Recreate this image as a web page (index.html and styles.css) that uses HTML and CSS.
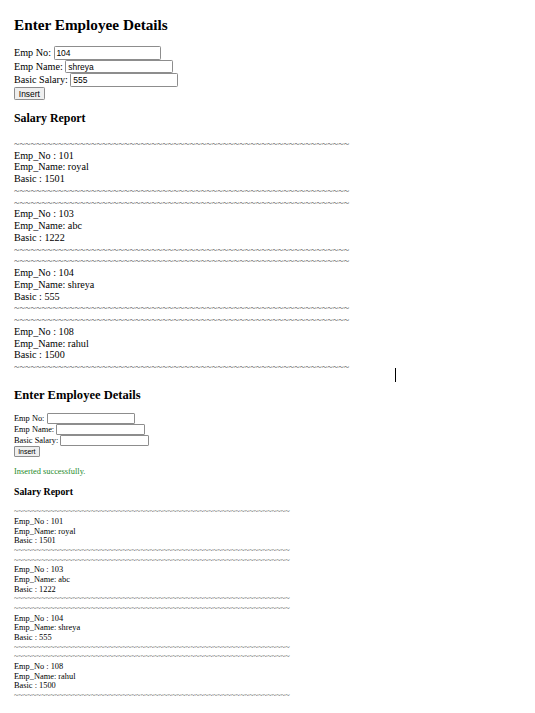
FILE: index.html
```html
<!DOCTYPE html>
<html>
<head>
<meta charset="utf-8">
<title>Employee Details</title>
<link rel="stylesheet" href="styles.css">
</head>
<body>
<div class="sheet">
  <section class="shot shot-top">
    <h2 class="title">Enter Employee Details</h2>
    <form class="emp-form">
      <div class="row">Emp No: <input class="field" type="text" value="104"></div>
      <div class="row">Emp Name: <input class="field" type="text" value="shreya"></div>
      <div class="row">Basic Salary: <input class="field" type="text" value="555"></div>
      <div class="row"><button class="btn" type="button">Insert</button></div>
    </form>
    <h3 class="subtitle">Salary Report</h3>
    <div class="report">
      <div class="record">
        <span class="rule">~~~~~~~~~~~~~~~~~~~~~~~~~~~~~~~~~~~~~~~~~~~~~~~~~~~~~~~~~~~~~</span>
        <span class="line">Emp_No : 101</span>
        <span class="line">Emp_Name: royal</span>
        <span class="line">Basic : 1501</span>
        <span class="rule">~~~~~~~~~~~~~~~~~~~~~~~~~~~~~~~~~~~~~~~~~~~~~~~~~~~~~~~~~~~~~</span>
      </div>
      <div class="record">
        <span class="rule">~~~~~~~~~~~~~~~~~~~~~~~~~~~~~~~~~~~~~~~~~~~~~~~~~~~~~~~~~~~~~</span>
        <span class="line">Emp_No : 103</span>
        <span class="line">Emp_Name: abc</span>
        <span class="line">Basic : 1222</span>
        <span class="rule">~~~~~~~~~~~~~~~~~~~~~~~~~~~~~~~~~~~~~~~~~~~~~~~~~~~~~~~~~~~~~</span>
      </div>
      <div class="record">
        <span class="rule">~~~~~~~~~~~~~~~~~~~~~~~~~~~~~~~~~~~~~~~~~~~~~~~~~~~~~~~~~~~~~</span>
        <span class="line">Emp_No : 104</span>
        <span class="line">Emp_Name: shreya</span>
        <span class="line">Basic : 555</span>
        <span class="rule">~~~~~~~~~~~~~~~~~~~~~~~~~~~~~~~~~~~~~~~~~~~~~~~~~~~~~~~~~~~~~</span>
      </div>
      <div class="record">
        <span class="rule">~~~~~~~~~~~~~~~~~~~~~~~~~~~~~~~~~~~~~~~~~~~~~~~~~~~~~~~~~~~~~</span>
        <span class="line">Emp_No : 108</span>
        <span class="line">Emp_Name: rahul</span>
        <span class="line">Basic : 1500</span>
        <span class="rule">~~~~~~~~~~~~~~~~~~~~~~~~~~~~~~~~~~~~~~~~~~~~~~~~~~~~~~~~~~~~~</span>
      </div>
    </div>
  </section>

  <section class="shot shot-bottom">
    <h2 class="title">Enter Employee Details</h2>
    <form class="emp-form">
      <div class="row">Emp No: <input class="field" type="text" value=""></div>
      <div class="row">Emp Name: <input class="field" type="text" value=""></div>
      <div class="row">Basic Salary: <input class="field" type="text" value=""></div>
      <div class="row"><button class="btn" type="button">Insert</button></div>
    </form>
    <p class="notice">Inserted successfully.</p>
    <h3 class="subtitle">Salary Report</h3>
    <div class="report">
      <div class="record">
        <span class="rule">~~~~~~~~~~~~~~~~~~~~~~~~~~~~~~~~~~~~~~~~~~~~~~~~~~~~~~~~~~~~~</span>
        <span class="line">Emp_No : 101</span>
        <span class="line">Emp_Name: royal</span>
        <span class="line">Basic : 1501</span>
        <span class="rule">~~~~~~~~~~~~~~~~~~~~~~~~~~~~~~~~~~~~~~~~~~~~~~~~~~~~~~~~~~~~~</span>
      </div>
      <div class="record">
        <span class="rule">~~~~~~~~~~~~~~~~~~~~~~~~~~~~~~~~~~~~~~~~~~~~~~~~~~~~~~~~~~~~~</span>
        <span class="line">Emp_No : 103</span>
        <span class="line">Emp_Name: abc</span>
        <span class="line">Basic : 1222</span>
        <span class="rule">~~~~~~~~~~~~~~~~~~~~~~~~~~~~~~~~~~~~~~~~~~~~~~~~~~~~~~~~~~~~~</span>
      </div>
      <div class="record">
        <span class="rule">~~~~~~~~~~~~~~~~~~~~~~~~~~~~~~~~~~~~~~~~~~~~~~~~~~~~~~~~~~~~~</span>
        <span class="line">Emp_No : 104</span>
        <span class="line">Emp_Name: shreya</span>
        <span class="line">Basic : 555</span>
        <span class="rule">~~~~~~~~~~~~~~~~~~~~~~~~~~~~~~~~~~~~~~~~~~~~~~~~~~~~~~~~~~~~~</span>
      </div>
      <div class="record">
        <span class="rule">~~~~~~~~~~~~~~~~~~~~~~~~~~~~~~~~~~~~~~~~~~~~~~~~~~~~~~~~~~~~~</span>
        <span class="line">Emp_No : 108</span>
        <span class="line">Emp_Name: rahul</span>
        <span class="line">Basic : 1500</span>
        <span class="rule">~~~~~~~~~~~~~~~~~~~~~~~~~~~~~~~~~~~~~~~~~~~~~~~~~~~~~~~~~~~~~</span>
      </div>
    </div>
  </section>

  <span class="cursor"></span>
</div>
</body>
</html>
```

FILE: styles.css
```css
html, body {
  margin: 0;
  padding: 0;
  background: #ffffff;
}

body {
  font-family: "Liberation Serif", "Times New Roman", serif;
  color: #000000;
}

.sheet {
  position: relative;
  padding-left: 14px;
  min-height: 713px;
  box-sizing: border-box;
}

.shot {
  font-size: 16px;
  line-height: 18.5px;
}

.shot-top {
  zoom: 0.635;
  padding-top: 5.6px;
}

.shot-bottom {
  zoom: 0.523;
  padding-top: 9px;
}

.title {
  font-size: 24px;
  line-height: 27.6px;
  font-weight: bold;
  margin: 19.92px 0;
}

.subtitle {
  font-size: 18.72px;
  line-height: 21.5px;
  font-weight: bold;
  margin: 18.72px 0;
}

.emp-form {
  margin: 0;
}

.row {
  height: 21.3px;
  line-height: 21.3px;
  white-space: nowrap;
}

.field {
  font-family: "Liberation Sans", Arial, sans-serif;
  font-size: 13.333px;
  width: 169px;
  height: 21px;
  box-sizing: border-box;
  padding: 1px 3px;
  margin: 0;
  border: 1px solid #8d8d8d;
  border-radius: 2px;
  background: #ffffff;
  color: #000000;
  vertical-align: top;
  outline: none;
}

.btn {
  font-family: "Liberation Sans", Arial, sans-serif;
  font-size: 13.333px;
  height: 21px;
  padding: 1px 6px;
  margin: 0;
  border: 1px solid #8d8d8d;
  border-radius: 2px;
  background: #efefef;
  color: #000000;
  vertical-align: top;
}

.notice {
  color: #1e8a2a;
  margin: 18px 0 16px;
}

.report {
  margin: 16px 0 0;
}

.record > span {
  display: block;
  white-space: nowrap;
}

.rule {
  color: #555555;
}

.cursor {
  position: absolute;
  left: 395px;
  top: 368px;
  width: 1px;
  height: 14px;
  background: #000000;
}
```
